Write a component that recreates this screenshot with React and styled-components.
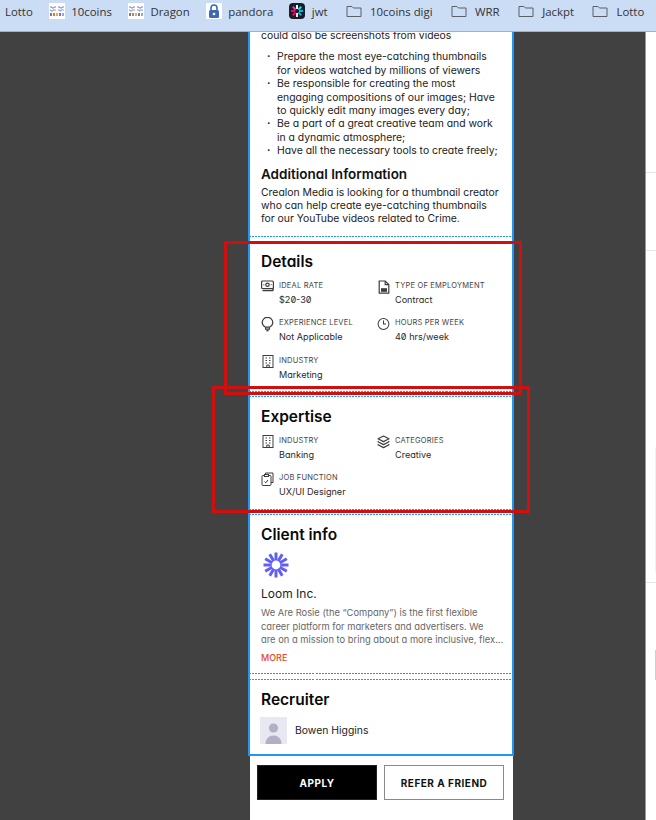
import styled, { createGlobalStyle } from "styled-components";
import { Clock3 } from "lucide-react";

const GlobalStyle = createGlobalStyle`
  html, body {
    margin: 0;
    padding: 0;
    height: 820px;
    overflow: hidden;
    background: #414141;
  }
`;

const MoneyIcon = () => (
  <svg width="13" height="12" viewBox="0 0 13 12" fill="none" stroke="#3c3c3c" strokeWidth="1.2">
    <rect x="0.6" y="1" width="11.8" height="7.5" rx="1" />
    <circle cx="6.5" cy="4.75" r="1.7" />
    <path d="M2.4 4.75h1M9.6 4.75h1" />
    <path d="M1.5 10.6h10.2l.8-2" strokeWidth="1.5" />
  </svg>
);

const FileIcon = () => (
  <svg width="12" height="14" viewBox="0 0 12 14" fill="none" stroke="#3c3c3c" strokeWidth="1.2">
    <path d="M1.2 1h6l3.6 3.6v8.6H1.2z" />
    <path d="M7.2 1v3.6h3.6" />
    <rect x="3" y="8.2" width="6" height="3.6" fill="#3c3c3c" stroke="none" />
  </svg>
);

const BulbIcon = () => (
  <svg width="13" height="15" viewBox="0 0 13 15" fill="none" stroke="#3c3c3c" strokeWidth="1.2">
    <path d="M4.6 10.2C2.6 9.3 1.2 7.6 1.2 5.6a5.3 5.3 0 0 1 10.6 0c0 2-1.4 3.7-3.4 4.6z" />
    <path d="M4.6 10.2v2h3.8v-2" />
    <path d="M5.4 13.6h2.2" strokeWidth="1.4" />
  </svg>
);

const BuildingIcon = () => (
  <svg width="12" height="13" viewBox="0 0 12 13" fill="none" stroke="#3c3c3c" strokeWidth="1">
    <rect x="1" y="0.5" width="10" height="12" />
    <path d="M3.5 3h1.5M7 3h1.5M3.5 5.5h1.5M7 5.5h1.5M3.5 8h1.5M7 8h1.5" strokeWidth="1.2" />
    <path d="M4.8 12.5v-2.5h2.4v2.5" />
  </svg>
);

const LayersIcon = () => (
  <svg width="13" height="14" viewBox="0 0 13 14" fill="none" stroke="#3c3c3c" strokeWidth="1.2" strokeLinejoin="round">
    <path d="M6.5 1L12 3.8 6.5 6.6 1 3.8z" />
    <path d="M1.6 6.2L1 6.8l5.5 2.8L12 6.8l-.6-.6" />
    <path d="M1.6 9.2L1 9.8l5.5 2.8L12 9.8l-.6-.6" />
  </svg>
);

const JobIcon = () => (
  <svg width="13" height="14" viewBox="0 0 13 14" fill="none" stroke="#3c3c3c" strokeWidth="1">
    <path d="M4.5 3V1h7.5v9.5h-2" />
    <rect x="1" y="3.5" width="9" height="10" rx="1" />
    <rect x="3.5" y="2.5" width="4" height="2" fill="#fff" />
    <path d="M3.5 9.5l1.3 1.3 2.2-2.8" />
  </svg>
);

const PixelFavicon = () => (
  <FaviconBox>
    <svg width="14" height="11" viewBox="0 0 14 11">
      <path d="M0 1h2v1h2v-1h2M8 1h2v1h2v-1h2" fill="none" stroke="#7f86cc" strokeWidth="1" />
      <path d="M0 4h1v1h2v-1h3M8 4h2v1h1v-1h3" fill="none" stroke="#8f95d6" strokeWidth="1" />
      <rect y="7" width="2" height="3" fill="#6d78c6" />
      <rect x="3" y="7" width="2" height="3" fill="#e0773d" />
      <rect x="6" y="7" width="2" height="3" fill="#e3b23c" />
      <rect x="9" y="7" width="2" height="3" fill="#6d78c6" />
      <rect x="12" y="7" width="2" height="3" fill="#9ea3da" />
    </svg>
  </FaviconBox>
);

const LockFavicon = () => (
  <FaviconBox>
    <svg width="12" height="14" viewBox="0 0 12 14">
      <path d="M3 6V4a3 3 0 0 1 6 0v2" fill="none" stroke="#3d68b4" strokeWidth="1.6" />
      <rect x="1" y="6" width="10" height="8" rx="1.5" fill="#3d68b4" />
      <circle cx="6" cy="10" r="1.3" fill="#fff" />
    </svg>
  </FaviconBox>
);

const JwtFavicon = () => (
  <svg width="16" height="16" viewBox="0 0 16 16" strokeWidth="2">
    <rect width="16" height="16" rx="4" fill="#1c1c24" />
    <path d="M8 2v4" stroke="#f5f5f5" />
    <path d="M8 10v4" stroke="#e8e8e8" />
    <path d="M2 8h4" stroke="#fb015b" />
    <path d="M10 8h4" stroke="#00b9f1" />
    <path d="M3.8 3.8l2.8 2.8" stroke="#d63aff" />
    <path d="M12.2 3.8L9.4 6.6" stroke="#00f2e6" />
    <path d="M3.8 12.2l2.8-2.8" stroke="#fb015b" />
    <path d="M12.2 12.2L9.4 9.4" stroke="#00b9f1" />
  </svg>
);

const FolderIcon = () => (
  <svg width="16" height="16" viewBox="0 0 16 16" fill="none" stroke="#5b5f66" strokeWidth="1">
    <path d="M1 3.5h5l1.5 1.5h7.5v8.5H1z" />
  </svg>
);

const LoomLogo = () => (
  <svg width="26" height="26" viewBox="0 0 26 26" stroke="#625df5" strokeWidth="3">
    {[0, 30, 60, 90, 120, 150].map((deg) => (
      <line key={deg} x1="13" y1="0.5" x2="13" y2="25.5" transform={`rotate(${deg} 13 13)`} />
    ))}
    <circle cx="13" cy="13" r="4.4" fill="#fff" stroke="none" />
  </svg>
);

const AvatarIcon = () => (
  <svg width="27" height="27" viewBox="0 0 27 27" fill="#b3b0c6">
    <circle cx="13.5" cy="11" r="4.6" />
    <path d="M5.5 27c0-5.5 3.5-8.5 8-8.5s8 3 8 8.5z" />
  </svg>
);

const bookmarks = [
  { label: "Lotto" },
  { label: "10coins", icon: <PixelFavicon /> },
  { label: "Dragon", icon: <PixelFavicon /> },
  { label: "pandora", icon: <LockFavicon /> },
  { label: "jwt", icon: <JwtFavicon /> },
  { label: "10coins digi", icon: <FolderIcon />, folder: true },
  { label: "WRR", icon: <FolderIcon />, folder: true },
  { label: "Jackpt", icon: <FolderIcon />, folder: true },
  { label: "Lotto", icon: <FolderIcon />, folder: true },
];

const tasks = [
  "Prepare the most eye-catching thumbnails for videos watched by millions of viewers",
  "Be responsible for creating the most engaging compositions of our images; Have to quickly edit many images every day;",
  "Be a part of a great creative team and work in a dynamic atmosphere;",
  "Have all the necessary tools to create freely;",
];

const details = [
  { icon: <MoneyIcon />, label: "Ideal rate", value: "$20-30" },
  { icon: <FileIcon />, label: "Type of employment", value: "Contract" },
  { icon: <BulbIcon />, label: "Experience level", value: "Not Applicable" },
  { icon: <Clock3 size={14} color="#3c3c3c" strokeWidth={1.9} />, label: "Hours per week", value: "40 hrs/week" },
  { icon: <BuildingIcon />, label: "Industry", value: "Marketing" },
];

const expertise = [
  { icon: <BuildingIcon />, label: "Industry", value: "Banking" },
  { icon: <LayersIcon />, label: "Categories", value: "Creative" },
  { icon: <JobIcon />, label: "Job function", value: "UX/UI Designer" },
];

const InfoGrid = ({ items }) => (
  <Grid>
    {items.map((item) => (
      <Item key={item.label}>
        <IconSlot>{item.icon}</IconSlot>
        <div>
          <Label>{item.label}</Label>
          <Value>{item.value}</Value>
        </div>
      </Item>
    ))}
  </Grid>
);

export default function App() {
  return (
    <Page>
      <GlobalStyle />
      <BookmarkBar>
        {bookmarks.map((b, i) => (
          <Bookmark key={i} $folder={b.folder}>
            {b.icon}
            <span>{b.label}</span>
          </Bookmark>
        ))}
      </BookmarkBar>
      <Main>
        <Column>
          <Panel>
            <TopSection>
              <Text>could also be screenshots from videos</Text>
              <TaskList>
                {tasks.map((t) => (
                  <li key={t}>{t}</li>
                ))}
              </TaskList>
              <SubHeading>Additional Information</SubHeading>
              <Text>
                Crealon Media is looking for a thumbnail creator who can help create eye-catching
                thumbnails for our YouTube videos related to Crime.
              </Text>
            </TopSection>
            <Section>
              <Heading>Details</Heading>
              <InfoGrid items={details} />
            </Section>
            <ExpertiseSection>
              <Heading>Expertise</Heading>
              <InfoGrid items={expertise} />
            </ExpertiseSection>
            <ClientSection>
              <Heading>Client info</Heading>
              <LogoWrap>
                <LoomLogo />
              </LogoWrap>
              <ClientName>Loom Inc.</ClientName>
              <ClientText>
                We Are Rosie (the “Company”) is the first flexible
                <br />
                career platform for marketers and advertisers. We
                <br />
                are on a mission to bring about a more inclusive, flex...
              </ClientText>
              <MoreLink>More</MoreLink>
            </ClientSection>
            <RecruiterSection>
              <Heading>Recruiter</Heading>
              <Recruiter>
                <Avatar>
                  <AvatarIcon />
                </Avatar>
                <span>Bowen Higgins</span>
              </Recruiter>
            </RecruiterSection>
          </Panel>
          <Actions>
            <ApplyButton>Apply</ApplyButton>
            <ReferButton>Refer a friend</ReferButton>
          </Actions>
        </Column>
        <SidePanel>
          <SideBlock $height={141} />
          <SideBlock $height={78} />
          <TickBlock $height={332}>
            <FaintTick />
          </TickBlock>
          <SideRest>
            <GrayTick />
          </SideRest>
        </SidePanel>
        <Highlight $left={224} $top={241} $width={298} $height={154} />
        <Highlight $left={212} $top={386} $width={318} $height={127} />
      </Main>
    </Page>
  );
}

const Page = styled.div`
  width: 656px;
  height: 820px;
  display: flex;
  flex-direction: column;
  overflow: hidden;
  font-family: Inter, "Noto Sans", sans-serif;
  font-feature-settings: "cv11", "zero";
`;

const BookmarkBar = styled.div`
  height: 32px;
  flex: none;
  box-sizing: border-box;
  padding: 0 0 9px 5px;
  display: flex;
  align-items: center;
  gap: 16px;
  background: #cbdcf5;
  border-bottom: 1px solid #9fb0c8;
  font-family: "Open Sans", sans-serif;
  font-feature-settings: normal;
  font-size: 11.4px;
  color: #333;
  white-space: nowrap;
`;

const Bookmark = styled.div`
  display: flex;
  align-items: center;
  gap: ${(p) => (p.$folder ? "8px" : "6.5px")};
  margin-left: ${(p) => (p.$folder ? "2.5px" : "0")};
`;

const FaviconBox = styled.span`
  width: 16px;
  height: 16px;
  background: #fff;
  display: flex;
  align-items: center;
  justify-content: center;
`;

const Main = styled.div`
  position: relative;
  flex: 1;
  display: flex;
  padding-left: 248px;
  min-height: 0;
`;

const Column = styled.div`
  width: 266px;
  flex: none;
  display: flex;
  flex-direction: column;
`;

const Panel = styled.div`
  height: 724px;
  flex: none;
  box-sizing: border-box;
  overflow: hidden;
  background: #fff;
  border: 2px solid #2196f3;
  border-top: none;
`;

const Section = styled.section`
  margin-top: 4px;
  padding: 10px 11px 9px;
  border-style: solid;
  border-width: 1px 0;
  border-image: repeating-linear-gradient(90deg, #2196f3 0 2px, #fff 2px 3px) 1;
`;

const TopSection = styled(Section)`
  margin-top: -3px;
  padding-top: 0;
  padding-bottom: 10px;
  border-top-width: 0;
`;

const ExpertiseSection = styled(Section)`
  padding-bottom: 10px;
`;

const ClientSection = styled(Section)`
  padding-bottom: 8px;
`;

const RecruiterSection = styled(Section)`
  margin-top: 5px;
  padding-top: 10px;
  border-bottom-width: 0;

  h2 {
    margin-bottom: 0;
  }
`;

const Text = styled.p`
  margin: 0;
  font-size: 10.4px;
  line-height: 13.4px;
  color: #222;
`;

const TaskList = styled.ul`
  margin: 8px 0 0;
  padding: 0 0 0 16px;
  list-style: none;
  font-size: 10.4px;
  line-height: 13.4px;
  color: #222;

  li {
    position: relative;
  }

  li::before {
    content: "·";
    position: absolute;
    left: -10px;
    font-weight: 700;
  }
`;

const SubHeading = styled.h3`
  margin: 8px 0 4px;
  font-size: 13.5px;
  line-height: 16px;
  font-weight: 600;
  color: #111;
`;

const Heading = styled.h2`
  margin: 0 0 7px;
  font-size: 15.5px;
  line-height: 20px;
  font-weight: 600;
  color: #0a0a0a;
`;

const Grid = styled.div`
  display: grid;
  grid-template-columns: 116px 1fr;
  row-gap: 9.5px;
`;

const Item = styled.div`
  display: flex;
  gap: 5px;
`;

const IconSlot = styled.span`
  width: 13px;
  flex: none;
  display: flex;
  justify-content: center;
  padding-top: 1px;
`;

const Label = styled.div`
  font-size: 7.5px;
  line-height: 14px;
  letter-spacing: 0.2px;
  text-transform: uppercase;
  color: #444;
`;

const Value = styled.div`
  font-size: 9.1px;
  line-height: 14px;
  color: #2a2a2a;
`;

const LogoWrap = styled.div`
  margin: 7px 0 0 2px;
  height: 26px;
`;

const ClientName = styled.div`
  margin-top: 8px;
  font-size: 12px;
  line-height: 16px;
  color: #222;
`;

const ClientText = styled.p`
  margin: 4px -3px 0 0;
  font-size: 9.35px;
  line-height: 13.4px;
  color: #666;
  white-space: nowrap;
`;

const MoreLink = styled.div`
  margin-top: 4px;
  font-size: 9px;
  line-height: 14px;
  font-weight: 500;
  text-transform: uppercase;
  color: #e8452c;
`;

const Recruiter = styled.div`
  margin-top: 7px;
  display: flex;
  align-items: center;
  gap: 8px;
  font-size: 10.4px;
  color: #222;
`;

const Avatar = styled.div`
  width: 27px;
  height: 27px;
  margin-left: -1px;
  background: #e8e8f2;
  overflow: hidden;
`;

const Actions = styled.div`
  flex: 1;
  margin: 0 1.5px;
  padding: 9px 8px 0 7.5px;
  background: #fff;
  display: flex;
  align-items: flex-start;
  gap: 7px;
`;

const ActionButton = styled.button`
  width: 120px;
  height: 35px;
  padding: 0;
  font-family: inherit;
  font-feature-settings: inherit;
  font-size: 10px;
  font-weight: 700;
  letter-spacing: 0.5px;
  text-transform: uppercase;
`;

const ApplyButton = styled(ActionButton)`
  background: #000;
  color: #fff;
  border: 1px solid #222;
`;

const ReferButton = styled(ActionButton)`
  background: #fff;
  color: #111;
  border: 1px solid #8a8a8a;
`;

const SidePanel = styled.div`
  margin-left: 131px;
  flex: 1;
  display: flex;
  flex-direction: column;
  background: #fff;
  border-left: 1px solid #9a9a9a;
`;

const SideBlock = styled.div`
  height: ${(p) => p.$height}px;
  flex: none;
  box-sizing: border-box;
  border-bottom: 1px solid #e6e6e6;
`;

const TickBlock = styled(SideBlock)`
  padding-top: 196px;
`;

const SideRest = styled.div`
  flex: 1;
  padding-top: 67px;
`;

const FaintTick = styled.div`
  margin-left: 9px;
  width: 1px;
  height: 126px;
  background: #f2f2f2;
`;

const GrayTick = styled.div`
  margin-left: 9px;
  width: 1px;
  height: 30px;
  background: #cfcfcf;
`;

const Highlight = styled.div`
  position: absolute;
  left: ${(p) => p.$left}px;
  top: ${(p) => p.$top - 32}px;
  width: ${(p) => p.$width}px;
  height: ${(p) => p.$height}px;
  box-sizing: border-box;
  border: 3px solid #d00f0f;
  pointer-events: none;
`;
